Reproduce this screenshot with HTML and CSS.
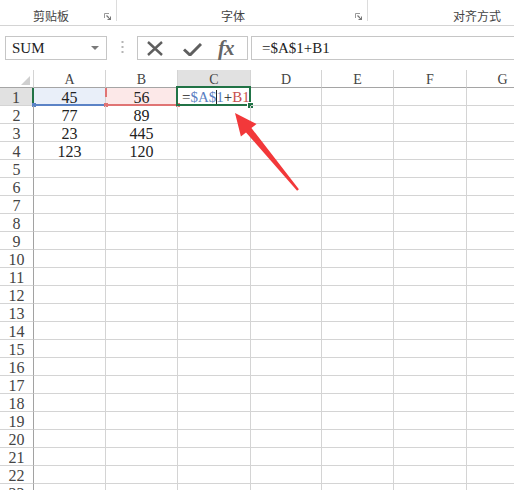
FILE: index.html
```html
<!DOCTYPE html>
<html lang="zh">
<head>
<meta charset="utf-8">
<title>Sheet</title>
<link rel="stylesheet" href="styles.css">
</head>
<body>
<div class="ribbon">
  <div class="grp g1"><span class="glabel">剪贴板</span><svg class="launch" width="7" height="7" viewBox="0 0 7 7"><path d="M0.5 5V0.5H5" fill="none" stroke="#999" stroke-width="1"/><path d="M2.5 2.5L6.5 6.5M3.5 6.5H6.5V3.5" fill="none" stroke="#777" stroke-width="1.2"/></svg></div>
  <div class="grp g2"><span class="glabel">字体</span><svg class="launch" width="7" height="7" viewBox="0 0 7 7"><path d="M0.5 5V0.5H5" fill="none" stroke="#999" stroke-width="1"/><path d="M2.5 2.5L6.5 6.5M3.5 6.5H6.5V3.5" fill="none" stroke="#777" stroke-width="1.2"/></svg></div>
  <div class="grp g3"><span class="glabel">对齐方式</span></div>
</div>

<div class="fbar">
  <div class="namebox"><span>SUM</span><span class="dd"></span></div>
  <svg class="dots" width="3" height="14" viewBox="0 0 3 14"><rect x="0.5" y="0" width="2" height="2" fill="#b5b5b5"/><rect x="0.5" y="5" width="2" height="2" fill="#b5b5b5"/><rect x="0.5" y="10" width="2" height="2" fill="#b5b5b5"/></svg>
  <div class="btns">
    <svg class="ic-x" width="18" height="15" viewBox="0 0 18 15"><path d="M2 1L16 14M16 1L2 14" stroke="#5f5f5f" stroke-width="2.4" fill="none"/></svg>
    <svg class="ic-ok" width="19" height="13" viewBox="0 0 19 13"><path d="M1 6.5L7 12L18 1" stroke="#5f5f5f" stroke-width="3" fill="none"/></svg>
    <span class="ic-fx">fx</span>
  </div>
  <div class="finput">=$A$1+B1</div>
</div>

<div class="sheet">
  <div class="row hrow">
    <span class="corner"><i class="tri"></i></span><span>A</span><span>B</span><span class="act">C</span><span>D</span><span>E</span><span>F</span><span>G</span>
  </div>
  <div class="row"><span class="rh act1">1</span><span class="a1">45<i class="sq sq-bl blue"></i></span><span class="b1">56<i class="rdash"></i><i class="sq sq-bl red"></i><i class="sq sq-br red"></i></span><span class="c1"><i class="selbox"></i><b class="eq">=</b><b class="ref1">$A$</b><i class="caret"></i><b class="ref1">1</b><b class="eq">+</b><b class="ref2">B1</b><i class="handle"></i></span><span></span><span></span><span></span><span></span></div>
  <div class="row"><span class="rh">2</span><span>77</span><span>89</span><span></span><span></span><span></span><span></span><span></span></div>
  <div class="row"><span class="rh">3</span><span>23</span><span>445</span><span></span><span></span><span></span><span></span><span></span></div>
  <div class="row"><span class="rh">4</span><span>123</span><span>120</span><span></span><span></span><span></span><span></span><span></span></div>
  <div class="row"><span class="rh">5</span><span></span><span></span><span></span><span></span><span></span><span></span><span></span></div>
  <div class="row"><span class="rh">6</span><span></span><span></span><span></span><span></span><span></span><span></span><span></span></div>
  <div class="row"><span class="rh">7</span><span></span><span></span><span></span><span></span><span></span><span></span><span></span></div>
  <div class="row"><span class="rh">8</span><span></span><span></span><span></span><span></span><span></span><span></span><span></span></div>
  <div class="row"><span class="rh">9</span><span></span><span></span><span></span><span></span><span></span><span></span><span></span></div>
  <div class="row"><span class="rh">10</span><span></span><span></span><span></span><span></span><span></span><span></span><span></span></div>
  <div class="row"><span class="rh">11</span><span></span><span></span><span></span><span></span><span></span><span></span><span></span></div>
  <div class="row"><span class="rh">12</span><span></span><span></span><span></span><span></span><span></span><span></span><span></span></div>
  <div class="row"><span class="rh">13</span><span></span><span></span><span></span><span></span><span></span><span></span><span></span></div>
  <div class="row"><span class="rh">14</span><span></span><span></span><span></span><span></span><span></span><span></span><span></span></div>
  <div class="row"><span class="rh">15</span><span></span><span></span><span></span><span></span><span></span><span></span><span></span></div>
  <div class="row"><span class="rh">16</span><span></span><span></span><span></span><span></span><span></span><span></span><span></span></div>
  <div class="row"><span class="rh">17</span><span></span><span></span><span></span><span></span><span></span><span></span><span></span></div>
  <div class="row"><span class="rh">18</span><span></span><span></span><span></span><span></span><span></span><span></span><span></span></div>
  <div class="row"><span class="rh">19</span><span></span><span></span><span></span><span></span><span></span><span></span><span></span></div>
  <div class="row"><span class="rh">20</span><span></span><span></span><span></span><span></span><span></span><span></span><span></span></div>
  <div class="row"><span class="rh">21</span><span></span><span></span><span></span><span></span><span></span><span></span><span></span></div>
  <div class="row"><span class="rh">22</span><span></span><span></span><span></span><span></span><span></span><span></span><span></span></div>
  <div class="row"><span class="rh">23</span><span></span><span></span><span></span><span></span><span></span><span></span><span></span></div>
</div>

<svg class="arrow" width="514" height="490" viewBox="0 0 514 490"><polygon points="235,113 256.5,124 251.4,128 298.9,189.3 297.1,190.7 246,132.4 240.9,136.4" fill="#f2383a"/></svg>
</body>
</html>
```

FILE: styles.css
```css
html, body {
  margin: 0;
  height: 490px;
  overflow: hidden;
  background: #fff;
}
body {
  position: relative;
  font-family: "Liberation Serif", "DejaVu Serif", serif;
  color: #222;
}

/* ribbon group labels */
.ribbon {
  display: flex;
  height: 25px;
  border-bottom: 1px solid #d4d4d4;
  font-family: "Noto Sans CJK SC", "Noto Sans", sans-serif;
  font-size: 12px;
  color: #444;
}
.grp {
  display: flex;
  align-items: flex-end;
  height: 25px;
  box-sizing: border-box;
  background: linear-gradient(#dcdcdc, #dcdcdc) right top / 1px 21px no-repeat;
}
.g1 { width: 117px; }
.g2 { width: 251px; }
.g3 { flex: 1; background: none; }
.glabel {
  line-height: 14px;
  padding-bottom: 2px;
}
.g1 .glabel { margin-left: 33px; }
.g2 .glabel { margin-left: 104px; }
.g3 .glabel { margin-left: 85px; }
.launch {
  margin-left: auto;
  margin-right: 6px;
  margin-bottom: 5px;
}

/* formula bar */
.fbar {
  display: flex;
  align-items: center;
  height: 24px;
  margin: 10px 0;
}
.namebox {
  margin-left: 5px;
  width: 102px;
  height: 24px;
  box-sizing: border-box;
  border: 1px solid #c6c6c6;
  display: flex;
  align-items: center;
  padding-left: 6px;
  font-size: 15px;
  color: #222;
}
.dd {
  margin-left: auto;
  margin-right: 7px;
  width: 0;
  height: 0;
  border-style: solid;
  border-width: 4px 4px 0 4px;
  border-color: #7a7a7a transparent transparent transparent;
}
.dots { margin-left: 14px; }
.btns {
  margin-left: 13px;
  width: 111px;
  height: 24px;
  box-sizing: border-box;
  border: 1px solid #c6c6c6;
  display: flex;
  align-items: center;
  padding-left: 8px;
}
.ic-ok { margin-left: 19px; margin-top: 2px; }
.ic-fx {
  margin-left: 16px;
  font-family: "Liberation Serif", serif;
  font-style: italic;
  font-weight: bold;
  font-size: 21px;
  color: #666;
  letter-spacing: -1px;
  line-height: 20px;
}
.finput {
  margin-left: 3px;
  flex: 1;
  height: 24px;
  box-sizing: border-box;
  border: 1px solid #c6c6c6;
  border-right: none;
  padding-left: 10px;
  font-size: 15px;
  line-height: 22px;
  color: #222;
}

/* sheet grid */
.row {
  display: flex;
  height: 18px;
}
.row > span {
  position: relative;
  flex: none;
  box-sizing: border-box;
  height: 18px;
  border-right: 1px solid #d4d4d4;
  border-bottom: 1px solid #d4d4d4;
  text-align: center;
  font-size: 16px;
  line-height: 17px;
  padding-top: 1px;
  color: #222;
  white-space: nowrap;
}
.row > span:nth-child(1) { width: 34px; }
.row > span:nth-child(2) { width: 72px; }
.row > span:nth-child(3) { width: 72px; }
.row > span:nth-child(4) { width: 73px; }
.row > span:nth-child(5) { width: 71px; }
.row > span:nth-child(6) { width: 72px; }
.row > span:nth-child(7) { width: 73px; }
.row > span:nth-child(8) { width: 72px; }

.row > .rh {
  border-right-color: #a2a2a2;
  color: #444;
}
.hrow > span {
  border-bottom-color: #a5a5a5;
  color: #444;
  font-size: 14px;
}
.hrow > .corner {
  display: flex;
  justify-content: flex-end;
  align-items: flex-end;
  padding: 0 3px 2px 0;
}
.tri {
  width: 0;
  height: 0;
  border-style: solid;
  border-width: 0 0 9px 9px;
  border-color: transparent transparent #cfcfcf transparent;
}
.hrow > .act { background: #e1e1e1; }
.row > .act1 {
  background: #e1e1e1;
  border-right: 2px solid #217346;
}

.row > .a1 {
  background: #e9eff9;
  border-bottom: 2px solid #5b83c6;
}
.row > .b1 {
  background: #fce8e8;
  border-bottom: 2px solid #e07474;
}
.sq {
  position: absolute;
  width: 4px;
  height: 4px;
  bottom: -3px;
}
.sq-bl { left: -2px; }
.sq-br { right: -3px; }
.blue { background: #5b83c6; }
.red { background: #e07474; }
.rdash {
  position: absolute;
  left: -1px;
  top: 0;
  width: 2px;
  height: 9px;
  background: #e07474;
}

.row > .c1 {
  text-align: left;
  padding-left: 4px;
  font-size: 15px;
  overflow: visible;
}
.c1 b { font-weight: normal; }
.eq { color: #222; }
.ref1 { color: #5b7fc2; }
.ref2 { color: #c8504d; }
.caret {
  display: inline-block;
  width: 1px;
  height: 16px;
  margin: 0 -1px 0 0;
  vertical-align: -4px;
  background: #222;
}
.selbox {
  position: absolute;
  left: -2px;
  top: -2px;
  right: -1px;
  bottom: -1px;
  border: 2px solid #217346;
}
.handle {
  position: absolute;
  right: -4px;
  bottom: -4px;
  width: 5px;
  height: 5px;
  background: #217346;
  border: 1px solid #fff;
}

.arrow {
  position: absolute;
  left: 0;
  top: 0;
  pointer-events: none;
}
```
